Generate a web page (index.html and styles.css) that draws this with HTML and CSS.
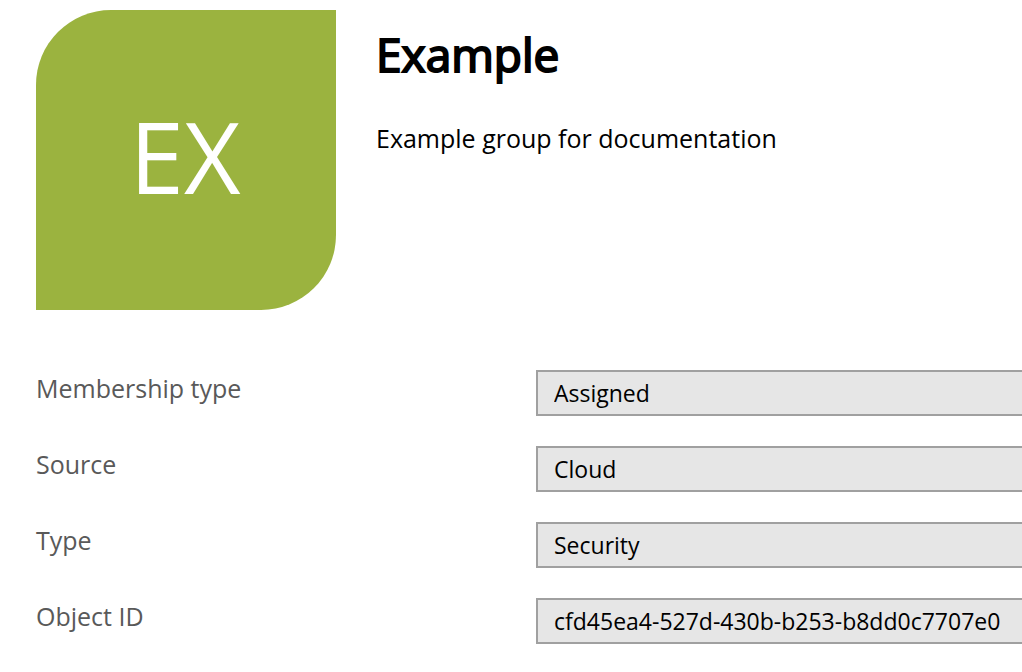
FILE: index.html
```html
<!DOCTYPE html>
<html lang="en">
<head>
<meta charset="utf-8">
<meta name="viewport" content="width=device-width, initial-scale=1">
<title>Example</title>
<link rel="stylesheet" href="styles.css">
</head>
<body>
<main class="overview">
  <header class="group">
    <div class="avatar">EX</div>
    <div class="summary">
      <h1 class="name">Example</h1>
      <p class="description">Example group for documentation</p>
    </div>
  </header>
  <form class="properties">
    <div class="property">
      <label class="label" for="membership">Membership type</label>
      <input class="value" id="membership" type="text" value="Assigned" readonly>
    </div>
    <div class="property">
      <label class="label" for="source">Source</label>
      <input class="value" id="source" type="text" value="Cloud" readonly>
    </div>
    <div class="property">
      <label class="label" for="type">Type</label>
      <input class="value" id="type" type="text" value="Security" readonly>
    </div>
    <div class="property">
      <label class="label" for="object-id">Object ID</label>
      <input class="value" id="object-id" type="text" value="cfd45ea4-527d-430b-b253-b8dd0c7707e0" readonly>
    </div>
  </form>
</main>
</body>
</html>
```

FILE: styles.css
```css
* { box-sizing: border-box; }

body {
  margin: 0;
  background: #fff;
  color: #000;
  font-family: "Segoe UI", "Open Sans", sans-serif;
  overflow-x: hidden;
}

.overview { padding: 10px 0 28px 36px; }

.group { display: flex; gap: 40px; }

.avatar {
  display: flex;
  align-items: center;
  justify-content: center;
  flex: none;
  width: 300px;
  height: 300px;
  padding: 0 2px 8px 0;
  border-radius: 75px 0;
  background: #9bb33f;
  color: #fff;
  font-size: 98px;
}

.summary { padding-top: 14px; }

.name {
  margin: 0;
  font-size: 46px;
  font-weight: 400;
  line-height: 60px;
  -webkit-text-stroke: 2px currentColor;
}

.description {
  margin: 36px 0 0;
  font-size: 25px;
  line-height: 36px;
}

.properties {
  display: grid;
  gap: 30px;
  margin-top: 60px;
}

.property {
  display: grid;
  grid-template-columns: 500px 1fr;
}

.label {
  color: #595959;
  font-size: 25px;
  line-height: 36px;
}

.value {
  width: calc(100% + 2px);
  height: 46px;
  padding: 0 16px;
  border: 2px solid #a0a0a0;
  border-radius: 0;
  background: #e6e6e6;
  color: #000;
  font-family: inherit;
  font-size: 23px;
}
```
